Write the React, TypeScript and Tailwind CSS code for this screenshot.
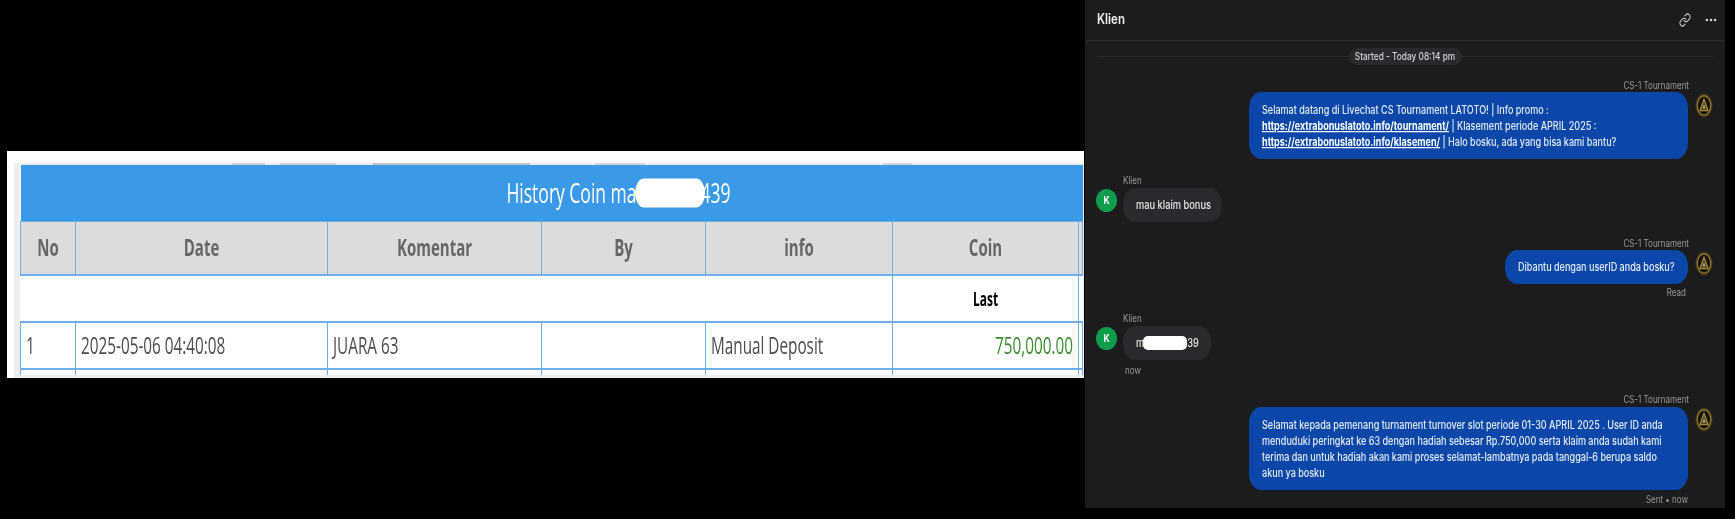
import { Ellipsis, Link } from 'lucide-react';

const cellText = 'block scale-y-[1.5] text-[15.3px] leading-none text-[#4d4d4d]';
const headText = 'block scale-y-[1.6] text-[15px] font-bold leading-none text-[#666]';
const line = 'block h-4 leading-4 scale-y-[1.25] whitespace-nowrap';
const meta = 'h-3 text-[8px] leading-3 text-[#9a9a9f] scale-y-[1.25] whitespace-nowrap';

function AgentAvatar() {
  return (
    <svg width="18" height="25" viewBox="0 0 18 25" className="mt-px ml-[7px] shrink-0">
      <ellipse cx="9" cy="12.5" rx="8.5" ry="12" fill="#3d3216" />
      <ellipse cx="9" cy="12.5" rx="6.8" ry="9.8" fill="#15130e" stroke="#8f7730" strokeWidth="1.4" />
      <path d="M9 6.5 L13 17.5 H5 Z" fill="#3a3118" stroke="#a08a42" strokeWidth="1.4" />
      <path d="M9 11 L10.6 15.5 H7.4 Z" fill="#c2ad6a" />
    </svg>
  );
}

function ClientAvatar() {
  return (
    <div className="mt-px mr-[6px] flex h-[23px] w-[21px] shrink-0 items-center justify-center rounded-[50%] bg-[#0f9d4d] text-[8.5px] font-bold text-white">
      <span className="scale-y-[1.25]">K</span>
    </div>
  );
}

function AgentMessage({ lines, width, footer }: { lines: React.ReactNode[]; width: string; footer?: React.ReactNode }) {
  return (
    <div className="flex flex-col">
      <div className={`${meta} pr-[36px] text-right`}>CS-1 Tournament</div>
      <div className="mt-px flex items-start justify-end pr-[12px]">
        <div className={`${width} rounded-[12px/16px] bg-[#0b47a8] text-[9.05px] font-medium text-[#e6ebf5]`}>
          {lines.map((l, i) => (
            <span key={i} className={line}>
              {l}
            </span>
          ))}
        </div>
        <AgentAvatar />
      </div>
      {footer}
    </div>
  );
}

function ClientMessage({ children, width }: { children: React.ReactNode; width: string }) {
  return (
    <div className="flex flex-col">
      <div className={`${meta} pl-[38px]`}>Klien</div>
      <div className="mt-[2px] flex items-start pl-[11px]">
        <ClientAvatar />
        <div className={`${width} flex h-[34px] items-center rounded-[12px/16px] bg-[#2a2a2e] pl-[13px] text-[9.3px] font-medium text-[#e6e6e8]`}>
          {children}
        </div>
      </div>
    </div>
  );
}

function HistoryTable() {
  return (
    <div className="h-[227px] w-[1077px] overflow-hidden bg-white pt-3 pl-[7px] blur-[0.5px] font-['Open_Sans',sans-serif]">
      <div className="h-[215px] bg-[#eeeeee] pl-[6px]">
        {/* leftovers of the row cut off above the table */}
        <div className="flex h-[2px] pl-[212px]">
          <span className="w-[33px] bg-[#cfcfcf]" />
          <span className="ml-[15px] w-[56px] bg-[#cfcfcf]" />
          <span className="ml-[37px] w-[157px] bg-[#c4c4c4]" />
          <span className="ml-[65px] w-[50px] bg-[#d6d6d6]" />
          <span className="ml-[238px] w-[29px] bg-[#d6d6d6]" />
        </div>
        <table className="w-[1062px] table-fixed border-collapse bg-white text-[#555]">
          <colgroup>
            <col className="w-[55px]" />
            <col className="w-[252px]" />
            <col className="w-[214px]" />
            <col className="w-[164px]" />
            <col className="w-[187px]" />
            <col className="w-[186px]" />
            <col className="w-[4px]" />
          </colgroup>
          <tbody>
            <tr className="h-[56px] bg-[#3a9ae8]">
              <td colSpan={7} className="p-0 pl-[134px] text-center text-white">
                <span className="inline-flex scale-y-[1.6] items-center text-[17.5px] leading-none">
                  History Coin ma
                  <span className="relative z-10 -mr-[4px] -ml-[2px] h-[18px] w-[70px] rounded-[9px] bg-white" />
                  439
                </span>
              </td>
            </tr>
            <tr className="h-[54px] bg-[#dcdcdc] [&>td]:border [&>td]:border-[#6db0e8] [&>td]:p-0 [&>td]:text-center">
              <td><span className={headText}>No</span></td>
              <td><span className={headText}>Date</span></td>
              <td><span className={headText}>Komentar</span></td>
              <td><span className={headText}>By</span></td>
              <td><span className={headText}>info</span></td>
              <td><span className={headText}>Coin</span></td>
              <td className="border-r-0" />
            </tr>
            <tr className="h-[47px] [&>td]:border-y-2 [&>td]:border-[#6db0e8]">
              <td colSpan={5} />
              <td className="border-x pt-[3px] text-center">
                <span className="block scale-y-[1.6] text-[12px] leading-none font-bold text-black">Last</span>
              </td>
              <td />
            </tr>
            <tr className="h-[47px] [&>td]:border [&>td]:border-y-2 [&>td]:border-[#6db0e8] [&>td]:px-[5px]">
              <td><span className={cellText}>1</span></td>
              <td><span className={cellText}>2025-05-06 04:40:08</span></td>
              <td><span className={cellText}>JUARA 63</span></td>
              <td />
              <td><span className={cellText}>Manual Deposit</span></td>
              <td className="text-right">
                <span className="block scale-y-[1.5] text-[15.3px] leading-none text-[#3b8f2e]">750,000.00</span>
              </td>
              <td />
            </tr>
            <tr className="h-[6px] [&>td]:border-x [&>td]:border-[#6db0e8]">
              <td /><td /><td /><td /><td /><td /><td className="border-r-0" />
            </tr>
          </tbody>
        </table>
      </div>
    </div>
  );
}

function ChatPanel() {
  return (
    <div className="h-[508px] w-[640px] bg-[#1c1c1f] font-['Inter',sans-serif] blur-[0.4px]">
      {/* Header */}
      <div className="flex h-[41px] items-center justify-between border-b border-[#2c2c30] pr-[7px] pl-3">
        <span className="scale-y-[1.25] text-[11.5px] font-semibold text-[#eeeeee]">Klien</span>
        <div className="flex items-center gap-[13px] text-[#d8d8d8]">
          <Link size={12} strokeWidth={1.8} className="scale-y-[1.2]" />
          <Ellipsis size={14} strokeWidth={2.4} />
        </div>
      </div>

      {/* Started separator */}
      <div className="mx-3 mt-[7px] flex items-center">
        <div className="h-px flex-1 bg-[#2a2a2e]" />
        <div className="flex h-[17px] w-[113px] items-center justify-center rounded-full bg-[#2a2a2e]">
          <span className="scale-y-[1.25] text-[8.3px] font-medium text-[#d4d4d8]">Started - Today 08:14 pm</span>
        </div>
        <div className="h-px flex-1 bg-[#2a2a2e]" />
      </div>

      <div className="mt-[14px]">
        <AgentMessage
          width="w-[439px] pt-[10px] pb-[9px] pl-[13px]"
          lines={[
            'Selamat datang di Livechat CS Tournament LATOTO! | Info promo :',
            <>
              <span className="font-bold text-white underline">https://extrabonuslatoto.info/tournament/</span> | Klasement periode APRIL 2025 :
            </>,
            <>
              <span className="font-bold text-white underline">https://extrabonuslatoto.info/klasemen/</span> | Halo bosku, ada yang bisa kami bantu?
            </>,
          ]}
        />
      </div>

      <div className="mt-[15px]">
        <ClientMessage width="w-[99px]">
          <span className="scale-y-[1.25]">mau klaim bonus</span>
        </ClientMessage>
      </div>

      <div className="mt-[15px]">
        <AgentMessage
          width="w-[183px] py-[9px] pl-[13px]"
          lines={['Dibantu dengan userID anda bosku?']}
          footer={<div className={`${meta} mt-[2px] pr-[39px] text-right`}>Read</div>}
        />
      </div>

      <div className="mt-[14px]">
        <ClientMessage width="w-[88px]">
          <span className="scale-y-[1.25]">m</span>
          <span className="ml-[-1px] h-[14px] w-[44px] rounded-[5px] bg-white" />
          <span className="scale-y-[1.25]">39</span>
        </ClientMessage>
        <div className={`${meta} mt-1 pl-10`}>now</div>
      </div>

      <div className="mt-[17px]">
        <AgentMessage
          width="mt-px w-[439px] pt-[10px] pb-[9px] pl-[13px]"
          lines={[
            'Selamat kepada pemenang turnament turnover slot periode 01-30 APRIL 2025 . User ID anda',
            'menduduki peringkat ke 63 dengan hadiah sebesar Rp.750,000 serta klaim anda sudah kami',
            'terima dan untuk hadiah akan kami proses selamat-lambatnya pada tanggal-6 berupa saldo',
            'akun ya bosku',
          ]}
          footer={<div className={`${meta} mt-[3px] pr-[37px] text-right`}>Sent • now</div>}
        />
      </div>
    </div>
  );
}

export default function App() {
  return (
    <div className="flex h-[519px] w-[1735px] items-start overflow-hidden bg-black">
      <div className="mt-[151px] ml-[7px]">
        <HistoryTable />
      </div>
      <div className="ml-px">
        <ChatPanel />
      </div>
    </div>
  );
}
